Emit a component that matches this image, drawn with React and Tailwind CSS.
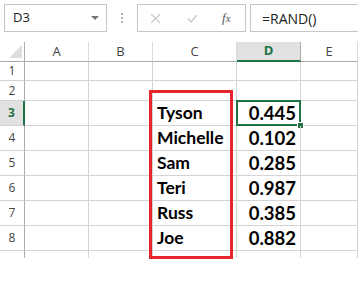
const rows = [
  { n: 1, h: 'h-[19px]' },
  { n: 2, h: 'h-[20px]' },
  { n: 3, h: 'h-[25px]', name: 'Tyson', value: '0.445' },
  { n: 4, h: 'h-[25px]', name: 'Michelle', value: '0.102' },
  { n: 5, h: 'h-[25px]', name: 'Sam', value: '0.285' },
  { n: 6, h: 'h-[25px]', name: 'Teri', value: '0.987' },
  { n: 7, h: 'h-[25px]', name: 'Russ', value: '0.385' },
  { n: 8, h: 'h-[25px]', name: 'Joe', value: '0.882' },
  { n: 9, h: 'h-[25px]' },
]

const cols = ['A', 'B', 'C', 'D', 'E']

const App = () => {
  return (
    <div className="w-[358px] h-[281px] bg-white overflow-hidden relative font-['Open_Sans','Liberation_Sans',sans-serif] text-[#444]">
      {/* Formula bar */}
      <div className="flex items-center pt-[4px] pl-[4px] h-[32px]">
        <div className="w-[103px] h-[28px] border border-[#c6c6c6] flex items-center justify-between pl-[8px] pr-[7px]">
          <span className="text-[13px] text-[#222]">D3</span>
          <span className="w-0 h-0 border-l-[4px] border-r-[4px] border-t-[4px] border-l-transparent border-r-transparent border-t-[#777]" />
        </div>
        <div className="w-[30px] h-[28px] flex flex-col items-center justify-center gap-[2px]">
          <span className="w-[2px] h-[2px] bg-[#b4b4b4]" />
          <span className="w-[2px] h-[2px] bg-[#b4b4b4]" />
          <span className="w-[2px] h-[2px] bg-[#b4b4b4]" />
        </div>
        <div className="w-[109px] h-[28px] border border-[#c6c6c6] flex items-center">
          <svg className="ml-[12px] w-[11px] h-[11px]" viewBox="0 0 11 11" fill="none" stroke="#c8c8c8" strokeWidth="1.2">
            <path d="M1 1l9 9M10 1l-9 9" />
          </svg>
          <svg className="ml-[26px] w-[11px] h-[9px]" viewBox="0 0 11 9" fill="none" stroke="#c8c8c8" strokeWidth="1.4">
            <path d="M1 4.5l3 3.5 6-7" />
          </svg>
          <span className="ml-[24px] text-[13px] italic text-[#555] font-['Liberation_Serif',serif]">
            f<span className="text-[11px]">x</span>
          </span>
        </div>
        <div className="flex-1 h-[28px] ml-[4px] border-y border-l border-[#c6c6c6] flex items-center pl-[11px]">
          <span className="text-[14px] text-[#222]">=RAND()</span>
        </div>
      </div>

      {/* Sheet */}
      <div className="mt-[10px] h-[216px] overflow-hidden">
        <div className="grid grid-cols-[25px_64px_64px_84px_64px_1fr]">
          {/* Header row */}
          <div className="h-[20px] border-r border-b border-[#ababab] flex items-end justify-end pr-[2px] pb-[3px]">
            <svg className="w-[13px] h-[13px]" viewBox="0 0 13 13">
              <path d="M13 0V13H0Z" fill="#dcdcdc" />
            </svg>
          </div>
          {cols.map((c) => (
            <div
              key={c}
              className={
                c === 'D'
                  ? 'h-[20px] bg-[#e1e1e1] border-r border-[#ababab] border-b-2 border-b-[#217346] flex items-center justify-center text-[13px] font-bold text-[#217346]'
                  : 'h-[20px] border-r border-[#dadada] border-b border-b-[#ababab] flex items-center justify-center text-[13px] text-[#444]'
              }
            >
              {c}
            </div>
          ))}

          {rows.map((r) => (
            <Row key={r.n} row={r} />
          ))}
        </div>
      </div>

      {/* Red outline around names */}
      <div className="absolute left-[149px] top-[90px] w-[84px] h-[169px] border-[3px] border-[#e3262d]" />
    </div>
  )
}

const Row = ({ row }) => {
  const active = row.n === 3
  const cell = `${row.h} border-r border-b border-[#d4d4d4]`
  return (
    <>
      <div
        className={
          active
            ? `${row.h} bg-[#e1e1e1] border-b border-[#d4d4d4] border-r-2 border-r-[#217346] flex items-center justify-center text-[12px] font-bold text-[#217346]`
            : `${row.h} border-b border-[#d4d4d4] border-r border-r-[#ababab] flex items-center justify-center text-[12px] text-[#444]`
        }
      >
        {row.n}
      </div>
      <div className={cell} />
      <div className={cell} />
      <div className={`${cell} flex items-end pl-[4px] pb-[2px]`}>
        {row.name && (
          <span className="font-['Lato',sans-serif] font-bold text-[17.5px] leading-[20px] text-black">{row.name}</span>
        )}
      </div>
      <div className={`${cell} relative flex items-end justify-end pr-[4px] pb-[2px]`}>
        {row.value && (
          <span className="font-['Lato',sans-serif] font-bold text-[18.5px] leading-[20px] text-black">{row.value}</span>
        )}
        {active && (
          <>
            <span className="absolute -left-[1px] -top-[1px] -right-[1px] -bottom-[1px] border-2 border-[#217346]" />
            <span className="absolute -right-[3px] -bottom-[3px] w-[5px] h-[5px] bg-[#217346] outline outline-1 outline-white" />
          </>
        )}
      </div>
      <div className={cell} />
    </>
  )
}

export default App
